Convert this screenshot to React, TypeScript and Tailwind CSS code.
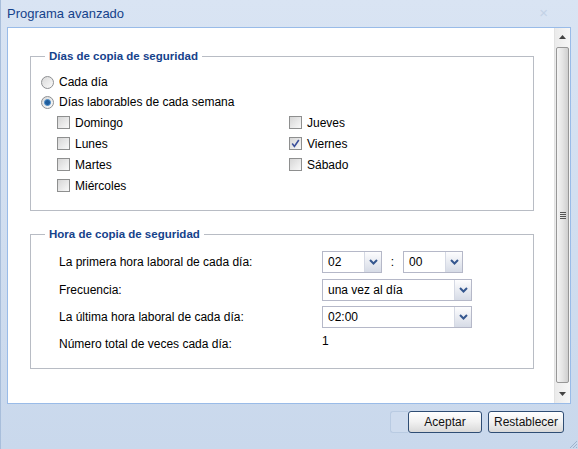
import { FC, ReactNode } from "react";

const Radio: FC<{ checked?: boolean }> = ({ checked }) => (
  <span className="w-[13px] h-[13px] rounded-full border border-[#8d8f92] bg-gradient-to-br from-[#d9d9d9] to-[#fbfbfb] flex items-center justify-center shrink-0">
    {checked && (
      <span className="w-[7px] h-[7px] rounded-full bg-[#1f5d9c] border border-[#4d8fcc]" />
    )}
  </span>
);

const Checkbox: FC<{ checked?: boolean }> = ({ checked }) => (
  <span className="w-[13px] h-[13px] border border-[#8e8f8f] bg-gradient-to-br from-[#d6d6d6] to-[#f9f9f9] flex items-center justify-center shrink-0">
    {checked && (
      <svg width="9" height="9" viewBox="0 0 9 9">
        <path d="M1.2 4.6 L3.4 7.4 L7.8 1" fill="none" stroke="#3b4f9b" strokeWidth="1.6" />
      </svg>
    )}
  </span>
);

const Chevron = () => (
  <svg width="9" height="6" viewBox="0 0 9 6">
    <path d="M1 1 L4.5 4.5 L8 1" fill="none" stroke="#35578f" strokeWidth="2" />
  </svg>
);

const Combo: FC<{ value: string; width: string }> = ({ value, width }) => (
  <div className={`${width} h-[22px] flex border border-[#b5b8c8] bg-white`}>
    <span className="flex-1 px-[5px] text-[12px] leading-[20px] text-black">{value}</span>
    <span className="w-[17px] border-l border-[#d5d9e4] bg-gradient-to-b from-[#fdfdfe] to-[#d6dbe6] flex items-center justify-center">
      <Chevron />
    </span>
  </div>
);

const Group: FC<{ title: string; className?: string; children: ReactNode }> = ({ title, className, children }) => (
  <fieldset className={`w-[504px] border border-[#b8bcc4] ${className ?? ""}`}>
    <legend className="ml-[14px] px-[4px] text-[11.5px] leading-[14px] font-bold text-[#15428b]">{title}</legend>
    {children}
  </fieldset>
);

const DayBox: FC<{ label: string; checked?: boolean }> = ({ label, checked }) => (
  <label className="h-[21px] flex items-center gap-[5px]">
    <Checkbox checked={checked} />
    <span>{label}</span>
  </label>
);

const FormRow: FC<{ label: string; h: string; children: ReactNode }> = ({ label, h, children }) => (
  <div className={`${h} flex items-center`}>
    <span className="w-[263px]">{label}</span>
    {children}
  </div>
);

export default function App() {
  return (
    <div className="relative w-[578px] h-[449px] flex flex-col bg-gradient-to-b from-[#d9e4f3] to-[#c9d8ec] border-l border-[#a8bedb] font-['Liberation_Sans',Arial,sans-serif] text-[12px] text-black overflow-hidden">
      {/* title bar */}
      <div className="h-[27px] pl-[6px] pr-[30px] flex items-center justify-between">
        <span className="text-[13px] text-[#15428b]">Programa avanzado</span>
        <span className="text-[15px] text-[#c3d2e6]">×</span>
      </div>

      {/* body */}
      <div className="ml-[6px] mr-[7px] h-[377px] flex border border-[#99bbe8] bg-white">
        <div className="flex-1 pl-[22px] pt-[21px]">
          <Group title="Días de copia de seguridad" className="pb-[14px]">
            <div className="pt-[9px] pl-[10px]">
              <label className="h-[20px] flex items-center gap-[5px]">
                <Radio />
                <span>Cada día</span>
              </label>
              <label className="h-[20px] flex items-center gap-[5px]">
                <Radio checked />
                <span>Días laborables de cada semana</span>
              </label>
            </div>
            <div className="pl-[26px] flex">
              <div className="w-[232px]">
                <DayBox label="Domingo" />
                <DayBox label="Lunes" />
                <DayBox label="Martes" />
                <DayBox label="Miércoles" />
              </div>
              <div>
                <DayBox label="Jueves" />
                <DayBox label="Viernes" checked />
                <DayBox label="Sábado" />
              </div>
            </div>
          </Group>

          <Group title="Hora de copia de seguridad" className="mt-[16px] pb-[11px]">
            <div className="pt-[7px] pl-[28px]">
              <FormRow label="La primera hora laboral de cada día:" h="h-[28px]">
                <Combo value="02" width="w-[60px]" />
                <span className="w-[21px] text-center">:</span>
                <Combo value="00" width="w-[60px]" />
              </FormRow>
              <FormRow label="Frecuencia:" h="h-[27px]">
                <Combo value="una vez al día" width="w-[150px]" />
              </FormRow>
              <FormRow label="La última hora laboral de cada día:" h="h-[27px]">
                <Combo value="02:00" width="w-[150px]" />
              </FormRow>
              <FormRow label="Número total de veces cada día:" h="h-[27px]">
                <span className="-mt-[6px]">1</span>
              </FormRow>
            </div>
          </Group>
        </div>

        {/* scrollbar */}
        <div className="w-[16px] flex flex-col bg-gradient-to-r from-[#ebebeb] to-[#f7f7f7] border-l border-[#e2e2e2]">
          <div className="h-[18px] flex items-center justify-center">
            <svg width="7" height="4" viewBox="0 0 7 4">
              <path d="M0 4 L3.5 0 L7 4 Z" fill="#444" />
            </svg>
          </div>
          <div className="flex-1 my-[1px] mx-[1px] rounded-[2px] border border-[#979797] bg-gradient-to-r from-[#f5f5f5] via-[#e4e4e4] to-[#cfcfcf] flex flex-col items-center justify-center gap-[1px]">
            <span className="w-[6px] h-[1px] bg-[#555]" />
            <span className="w-[6px] h-[1px] bg-[#555]" />
            <span className="w-[6px] h-[1px] bg-[#555]" />
            <span className="w-[6px] h-[1px] bg-[#555]" />
          </div>
          <div className="h-[19px] flex items-center justify-center">
            <svg width="7" height="4" viewBox="0 0 7 4">
              <path d="M0 0 L3.5 4 L7 0 Z" fill="#444" />
            </svg>
          </div>
        </div>
      </div>

      {/* buttons */}
      <div className="mt-[7px] pr-[14px] flex justify-end">
        <div className="w-[18px] h-[22px] border border-r-0 border-[#b9cbe2] rounded-l-[3px] bg-[#cfdcee]" />
        <button className="w-[74px] h-[22px] border border-[#2f4d74] rounded-[3px] bg-gradient-to-b from-[#ffffff] via-[#f1f1f1] to-[#d9d9d9] text-[12px] text-[#111]">
          Aceptar
        </button>
        <button className="ml-[6px] w-[76px] h-[22px] border border-[#2f4d74] rounded-[3px] bg-gradient-to-b from-[#ffffff] via-[#f1f1f1] to-[#d9d9d9] text-[12px] text-[#111]">
          Restablecer
        </button>
      </div>

      {/* resize grip */}
      <svg className="absolute right-0 bottom-0" width="9" height="9" viewBox="0 0 9 9">
        <path d="M8 1 L1 8 M8 4 L4 8 M8 7 L7 8" stroke="#9fb3cc" strokeWidth="1" />
      </svg>
    </div>
  );
}
